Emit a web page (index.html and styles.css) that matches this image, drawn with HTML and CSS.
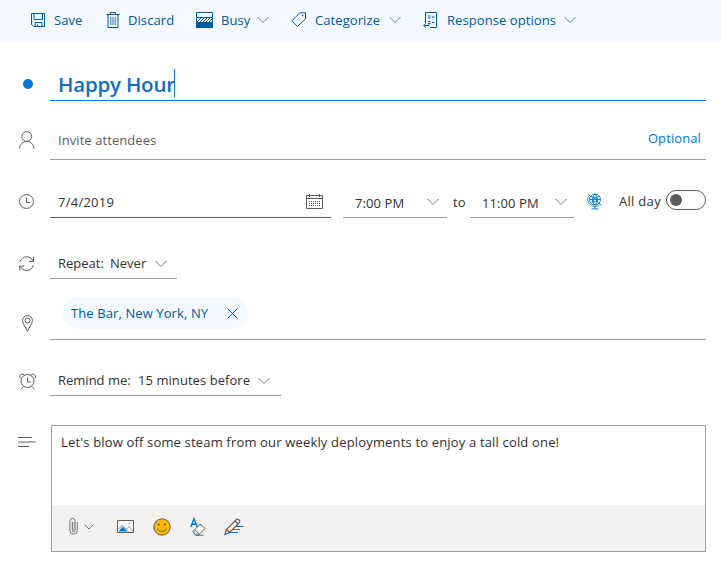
FILE: index.html
```
<!DOCTYPE html>
<html lang="en">
<head>
<meta charset="utf-8">
<title>Happy Hour</title>
<link rel="stylesheet" href="styles.css">
</head>
<body>
<svg width="0" height="0" class="defs" aria-hidden="true">
  <symbol id="chev" viewBox="0 0 12 8"><path d="M.5 1 6 6.500 11.500 1" fill="none" stroke="currentColor"/></symbol>
</svg>
<header class="bar">
  <button class="cmd save"><svg width="15" height="15" viewBox="0 0 15 15"><path d="M.5.500h13v13h-11l-2-2zM3 .5v6h8.500v-6M4 13.500V9.500h7v4M6.500 13.500V11.500"/></svg><span>Save</span></button>
  <button class="cmd discard"><svg width="14" height="16" viewBox="0 0 14 16"><path d="M.5 2.500h13M4.500 2.500V.5h5v2M2 2.500v13h10v-13"/><path class="soft" d="M4.500 5v8M6.200 5v8M7.900 5v8M9.600 5v8"/></svg><span>Discard</span></button>
  <button class="cmd busy"><svg width="17" height="16" viewBox="0 0 17 16"><path d="M.5.500h16v15H.5zM.5 5.500h16"/><path class="hatch" d="M1 10l4-4M4 10l4-4M7 10l4-4M10 10l4-4M13 10l3.500-3.500"/><path class="solid" d="M0 10h17v6H0z"/></svg><span>Busy</span><svg class="chev"><use href="#chev"/></svg></button>
  <button class="cmd categorize"><svg width="16" height="16" viewBox="0 0 16 16"><path d="M9 .8h5.500v6L6.500 14.500.8 8.700z"/><circle class="solid" cx="11.800" cy="3.500" r=".8"/></svg><span>Categorize</span><svg class="chev"><use href="#chev"/></svg></button>
  <button class="cmd response"><svg width="15" height="17" viewBox="0 0 15 17"><path d="M2.500 11V.5h11v15H7M.8 13.500H6v-2M3 11.300.8 13.500 3 15.700"/><path d="M5 4h2.500M9 5h2.500M5 6h2.500M5 9.500h2.500M9 10.500h2.500M5 11.500h2.500"/></svg><span>Response options</span><svg class="chev"><use href="#chev"/></svg></button>
</header>
<main class="form">
  <section class="row title-row">
    <div class="mark"><i class="dot"></i></div>
    <div class="field"><h1>Happy Hour</h1><i class="caret"></i></div>
  </section>
  <section class="row people-row">
    <div class="mark"><svg width="16" height="18" viewBox="0 0 16 18"><circle cx="7.700" cy="5.500" r="4.900"/><path d="M.6 17.500C.8 13 4 10.400 7.700 10.400s7 2.600 7.200 7.100"/></svg></div>
    <div class="field"><span class="placeholder">Invite attendees</span><a class="optional">Optional</a></div>
  </section>
  <section class="row date-row">
    <div class="mark"><svg width="16" height="16" viewBox="0 0 16 16"><circle cx="7.500" cy="7.500" r="7"/><path d="M7.500 3.500v5H11"/></svg></div>
    <div class="field date"><span class="date-text">7/4/2019</span><svg class="cal" width="17" height="15" viewBox="0 0 17 15"><path d="M.5 1.500h16v13H.5zM.5 4.500h16M3.500 0v3M13.500 0v3"/><path class="days" d="M3 7.500h11M3 9.500h11M3 11.500h11"/></svg></div>
    <div class="field time start"><span>7:00 PM</span><svg class="chev"><use href="#chev"/></svg></div>
    <span class="to">to</span>
    <div class="field time"><span>11:00 PM</span><svg class="chev"><use href="#chev"/></svg></div>
    <svg class="globe" width="15" height="17" viewBox="0 0 15 17"><circle cx="8" cy="6.500" r="5.500"/><circle cx="8" cy="6.500" r="2.400"/><path d="M3 3.500c4 0 7 3 8.500 7.500M13 3.500c-4 0-7 3-8.500 7.500M8 1C5 3.500 5 9.500 8 12c3-2.500 3-8.500 0-11M2.500 6.500h11M.8.800 3 2.800M1.200 3.500C-.5 8.500 3 13.500 8 13.500c2.200 0 4-.8 5.200-2.300M12 10l2.500 2.500M8 13.500v2.500M4.500 15.900h7"/></svg>
    <span class="allday">All day</span><i class="toggle"></i>
  </section>
  <section class="row repeat-row">
    <div class="mark"><svg width="16" height="16" viewBox="0 0 16 16"><path d="M.8 6C2 2.800 4.800.800 7.800.800c3 0 5 1.500 6.300 4M14.500 1v4.500H10M14.300 9c-.8 3.700-3.500 5.500-6.500 5.500s-5.200-1.500-6.500-4M.8 14.500V10h4.500"/></svg></div>
    <div class="field"><span class="label">Repeat:</span><span class="value">Never</span><svg class="chev"><use href="#chev"/></svg></div>
  </section>
  <section class="row place-row">
    <div class="mark"><svg width="12" height="17" viewBox="0 0 12 17"><path d="M5.500 16.300C4 12.500.6 9 .6 5.500a4.900 4.900 0 0 1 9.800 0C10.400 9 7 12.500 5.500 16.300z"/><circle cx="5.500" cy="5.500" r="2.500"/></svg></div>
    <div class="field"><span class="pill"><span>The Bar, New York, NY</span><svg width="11" height="11" viewBox="0 0 11 11"><path d="M.5.500l10 10M10.500.500l-10 10"/></svg></span></div>
  </section>
  <section class="row remind-row">
    <div class="mark"><svg width="18" height="17" viewBox="0 0 18 17"><circle cx="8.500" cy="8" r="6.500"/><path d="M8.500 4.500v4.500H12M4.300 13.500 2 16.500M13 13.500l2.500 3M1.300 5.300C-.5 3 2 0 5 1.500M15.900 5.300C17.700 3 15.200 0 12.200 1.500"/></svg></div>
    <div class="field"><span class="label">Remind me:</span><span class="value">15 minutes before</span><svg class="chev"><use href="#chev"/></svg></div>
  </section>
  <section class="row body-row">
    <div class="mark"><svg width="18" height="11" viewBox="0 0 18 11"><path d="M0 .5h14M0 5h17.500M0 9.500h11"/></svg></div>
    <div class="editor">
      <p>Let's blow off some steam from our weekly deployments to enjoy a tall cold one!</p>
      <div class="tools">
        <svg class="clip" width="9" height="17" viewBox="0 0 9 17"><path class="fill" d="M3 4h3v9H3z"/><path d="M8.300 4v8.500a3.700 3.700 0 0 1-7.400 0V3a2.600 2.600 0 0 1 5.200 0v9.500a1.400 1.400 0 0 1-2.800 0V4"/></svg>
        <svg class="down" width="10" height="6" viewBox="0 0 10 6"><path d="M.7.700 5 5 9.300.700"/></svg>
        <svg class="image" width="17" height="13" viewBox="0 0 17 13"><path fill="#fff" d="M.5.500h16v12H.5z"/><path class="blue" d="M1.500 11.500 5.500 6.500l5 5z"/><path class="thin" d="M1 9.500l4.300-4.300 6.500 6.500M9.500 9 12 6.500l4 4.500"/><circle class="blue" cx="12.500" cy="3.200" r=".7"/></svg>
        <svg class="smile" width="18" height="18" viewBox="0 0 18 18"><circle cx="9" cy="9" r="8.200"/><path d="M4.500 10.500c1.500 4 7.500 4 9 0"/><circle class="eye" cx="6" cy="6.500" r=".9"/><circle class="eye" cx="12" cy="6.500" r=".9"/></svg>
        <svg class="erase" width="16" height="18" viewBox="0 0 16 18"><path class="letter" d="M.8 9 4 .800 7.200 9M2 6.200h4"/><path fill="#fff" d="M3 13.500 10 6l5 4.500-6.500 6.500H5.500z"/><path class="tip" d="M3 13.500l1.800-2 4.300 4.300L8 17H5.500z"/><path d="M6 17.200h7.500"/></svg>
        <svg class="pen" width="20" height="18" viewBox="0 0 20 18"><path class="lines" d="M12 8.500h7.500M9 11.500h7M6 14.500h8"/><path fill="#fff" d="M1 16.500l1.500-5L12.500 1.500c1.500-1.200 4 .8 3 2.800L5.500 14.500zM2.500 11.500l3 3M11 3l3 3"/></svg>
      </div>
    </div>
  </section>
</main>
</body>
</html>
```
FILE: styles.css
```
* { box-sizing: border-box; }
body { margin: 0; background: #fff; color: #323130; font: 13px/20px "Open Sans", "Noto Sans", sans-serif; white-space: nowrap; }
svg { display: block; flex: none; fill: none; stroke: currentColor; overflow: visible; }
.defs { position: absolute; }
.chev { width: 12px; height: 8px; color: #777; }
.bar { display: flex; height: 42px; background: #f3f9fe; padding-left: 31px; color: #005a9e; }
.cmd { display: flex; align-items: center; height: 40px; padding: 0; border: 0; background: none; color: inherit; font: inherit; letter-spacing: .08px; }
.cmd .chev { color: #5486ad; }
.cmd > .chev { margin-left: -1px; }
.solid { fill: currentColor; stroke: none; }
.soft { stroke: #4b9bd0; }
.hatch { stroke-width: .9; }
.save { width: 75px; gap: 8px; }
.discard { width: 90px; gap: 8px; }
.busy { width: 95px; gap: 8px; }
.categorize { width: 132px; gap: 8px; }
.categorize > .chev { margin-left: 1px; }
.response { gap: 9px; }
.response > .chev { margin-left: -1px; }
.form { width: 706px; }
.row { display: flex; }
.mark { width: 50px; flex: none; color: #605e5c; padding-left: 19px; }
.field { display: flex; flex: 1; border-bottom: 1px solid #a19f9d; padding-left: 8px; }
.title-row { height: 59px; }
.title-row .mark { padding: 37px 0 0 23px; }
.dot { display: block; width: 10px; height: 10px; border-radius: 50%; background: #0078d4; }
.title-row .field { border-color: #0078d4; padding-top: 27px; }
h1 { margin: 0; font-size: 20.5px; line-height: 31px; font-weight: 600; letter-spacing: -.2px; color: #106ebe; width: 116px; }
.caret { width: 1px; height: 28px; background: #0078d4; }
.people-row { height: 59px; }
.people-row .mark { padding-top: 30px; }
.people-row .field { padding-top: 29px; }
.placeholder { color: #605e5c; letter-spacing: .07px; }
.optional { color: #0078d4; margin: -2px 5px 0 auto; letter-spacing: .1px; }
.date-row { height: 58px; }
.date-row .mark { padding-top: 34px; }
.date-row .field { padding-top: 32px; }
.date-row .date { flex: none; width: 281px; border-color: #605e5c; }
.date-text { letter-spacing: .25px; }
.cal { margin: 2px 8px 0 auto; color: #605e5c; }
.days { stroke-dasharray: 1 1; }
.date-row .time { flex: none; width: 104px; padding: 33px 8px 0 12px; }
.start { margin-left: 12px; }
.time span { letter-spacing: .1px; }
.time .chev { margin: 5px -1px 0 auto; }
.time.start .chev { margin-right: 0; }
.to { width: 23px; padding: 32px 0 0 6px; }
.globe { margin: 33px 0 0 13px; color: #0078d4; stroke-width: .9; }
.allday { margin: 31px 0 0 17px; width: 47px; letter-spacing: .3px; }
.toggle { display: block; width: 40px; height: 20px; margin-top: 30px; border: 1px solid #605e5c; border-radius: 10px; padding: 3px; }
.toggle::before { content: ""; display: block; width: 12px; height: 12px; border-radius: 50%; background: #605e5c; }
.repeat-row { height: 61px; }
.repeat-row .mark { padding-top: 38px; }
.repeat-row .field { flex: none; width: 127px; padding-top: 35px; }
.repeat-row .label { width: 52px; }
.repeat-row .value { width: 45px; }
.repeat-row .chev, .remind-row .chev { margin-top: 7px; }
.place-row { height: 61px; }
.place-row .mark { padding: 36px 0 0 22px; }
.place-row .field { padding: 18px 0 0 13px; }
.pill { display: flex; align-items: center; width: 185px; height: 32px; padding: 0 10px 0 8px; border-radius: 16px; background: #f3f9fe; color: #005a9e; justify-content: space-between; letter-spacing: .1px; }
.remind-row { height: 56px; }
.remind-row .mark { padding-top: 33px; }
.remind-row .field { flex: none; width: 231px; padding-top: 30px; }
.remind-row .label { width: 80px; }
.remind-row .value { width: 120px; letter-spacing: .06px; }
.body-row { margin-top: 29px; }
.body-row .mark { width: 51px; padding: 12px 0 0 18px; }
.editor { flex: 1; height: 127px; border: 1px solid #a19f9d; }
.editor p { margin: 0; height: 79px; padding: 6px 9px; letter-spacing: .165px; }
.tools { display: flex; align-items: center; height: 46px; padding-left: 17px; background: #f3f2f1; color: #605e5c; padding-bottom: 3px; }
.clip { color: #777; }
.fill { fill: #c8c6c4; stroke: none; }
.down { margin-left: 6px; color: #777; }
.image { margin-left: 23px; }
.thin { stroke-width: .7; }
.blue { fill: #0078d4; stroke: none; }
.smile { margin-left: 19px; fill: #ffb900; }
.smile path { fill: none; }
.smile .eye { fill: #605e5c; stroke: none; }
.erase { margin-left: 19px; }
.letter { stroke: #0078d4; stroke-width: 1.4; }
.lines { stroke: #0078d4; }
.tip { fill: #b8dcf5; stroke-width: .8; }
.pen { margin-left: 18px; stroke-width: 1.2; }
```
